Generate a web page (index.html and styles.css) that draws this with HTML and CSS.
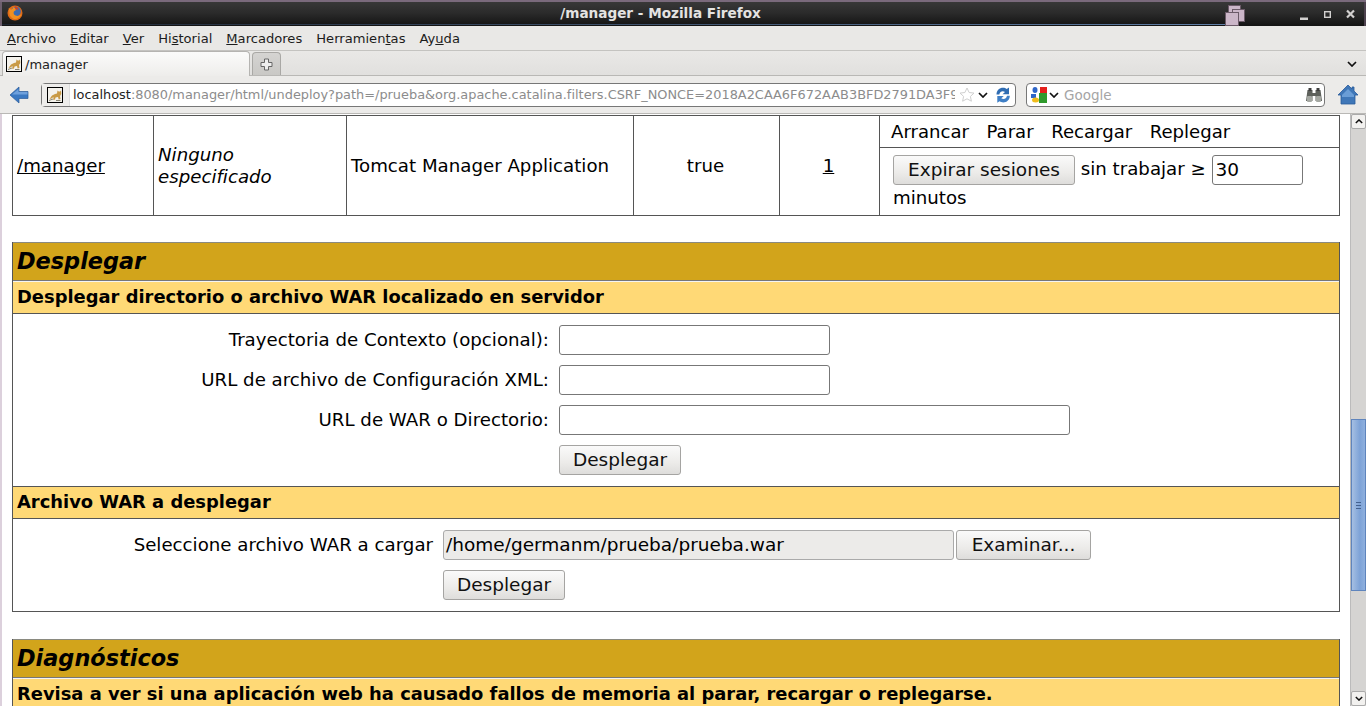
FILE: index.html
```html
<!DOCTYPE html>
<html lang="es">
<head>
<meta charset="utf-8">
<title>/manager - Mozilla Firefox</title>
<link rel="stylesheet" href="styles.css">
</head>
<body>
<svg class="defs" width="0" height="0" aria-hidden="true">
  <symbol id="cat" viewBox="0 0 16 16">
    <rect x="0.5" y="0.5" width="15" height="15" fill="#f4f2ec" stroke="#000"/>
    <path d="M2.500 12l2.500-3.500 3-1.500 2-.5.500-3 1.200 1h1.300l1-1 .3 3.500-1.300 2 .5 3-1.800.5-.7-2.500-2.500.5-.5 2-1.800.5.300-3-2 1.500z" fill="#c99a45"/>
    <path d="M2 13.500l4-1.500M9 13.500h4.500" stroke="#8a8674" stroke-width="1"/>
  </symbol>
  <symbol id="chev" viewBox="0 0 10 6">
    <path d="M1 1l4 4 4-4" fill="none" stroke="#111" stroke-width="1.700"/>
  </symbol>
</svg>

<header class="titlebar">
  <svg class="ff" viewBox="0 0 16 16" width="16" height="16">
    <circle cx="8" cy="8" r="7.500" fill="#e06a17"/>
    <circle cx="9" cy="6.500" r="4.800" fill="#3d6bb0"/>
    <path d="M1.500 3c.8 1.500 1 3 .8 5 .3 3.500 3 6 5.700 6 3.500 0 6-2.500 6.500-5.500-1 1.800-3 2.800-5 2.300-2.200-.5-3.300-2-2.800-3.800.4-1.200 2-1.500 2.600-2.200-.8-1.300-1.800-2.300-3-2.800 0 1.500-1.300 2-2.300 2.800C3.300 4 2.600 3.400 1.500 3z" fill="#f09022"/>
    <path d="M8 1c1.500.5 3 1.800 3.800 3.800-1.200-.2-2.300-.5-3.300 0z" fill="#d9431a"/>
  </svg>
  <h1 class="wintitle">/manager - Mozilla Firefox</h1>
  <div class="winctl">
    <svg class="pager" viewBox="0 0 21 21" width="21" height="21">
      <rect x="3.500" y="0.500" width="12" height="12" fill="#cbb6c8" stroke="#6b5a68"/>
      <rect x="7.500" y="4.500" width="12" height="12" fill="#cbb6c8" stroke="#6b5a68"/>
      <rect x="0.500" y="7.500" width="13" height="13" fill="#cbb6c8" stroke="#6b5a68"/>
    </svg>
    <svg class="wbtn" viewBox="0 0 60 12" width="60" height="12">
      <rect x="1" y="8.500" width="8" height="2.500" fill="#d2d0cf"/>
      <rect x="25.700" y="2.700" width="5.600" height="5.600" fill="none" stroke="#d2d0cf" stroke-width="1.400"/>
      <path d="M48 1.500l7 7M55 1.500l-7 7" stroke="#d2d0cf" stroke-width="2.200"/>
    </svg>
  </div>
</header>

<nav class="menubar">
  <span><u>A</u>rchivo</span><span><u>E</u>ditar</span><span><u>V</u>er</span><span>Hi<u>s</u>torial</span><span><u>M</u>arcadores</span><span>Herramien<u>t</u>as</span><span>Ay<u>u</u>da</span>
</nav>

<div class="tabbar">
  <div class="tab"><svg class="fav" width="16" height="16"><use href="#cat"/></svg><span>/manager</span></div>
  <div class="newtab">
    <svg viewBox="0 0 13 13" width="13" height="13"><path d="M4.500 1h4v3.500H12v4H8.500V12h-4V8.500H1v-4h3.500z" fill="#eee" stroke="#666"/></svg>
  </div>
  <svg class="tablist" width="10" height="6"><use href="#chev"/></svg>
</div>

<div class="navbar">
  <svg class="back" viewBox="0 0 20 20" width="20" height="20">
    <path d="M1 10l9-8v4.500h9v7h-9V18z" fill="#3a78c2" stroke="#2a5a9a" stroke-width=".7"/>
    <path d="M3 9.500l6.500-5.500v3h9v2.500z" fill="#6ea0dc"/>
  </svg>
  <div class="urlbar">
    <div class="idbox"><svg class="fav" width="16" height="16"><use href="#cat"/></svg></div>
    <div class="url"><b>localhost</b>:8080/manager/html/undeploy?path=/prueba&amp;org.apache.catalina.filters.CSRF_NONCE=2018A2CAA6F672AAB3BFD2791DA3F9</div>
    <svg class="star" viewBox="0 0 16 16" width="16" height="16"><path d="M8 1l2.100 4.500 4.900.6-3.600 3.300 1 4.800L8 11.800l-4.400 2.400 1-4.800L1 6.100l4.900-.6z" fill="#fff" stroke="#cfcfcf"/></svg>
    <svg class="drop" width="10" height="6"><use href="#chev"/></svg>
    <svg class="reload" viewBox="0 0 16 16" width="16" height="16">
      <path d="M1.500 7.500C1.500 3.500 4.500.8 8 .8c1.500 0 2.700.5 3.700 1.200L14 .5v6.800H7.500L10 5C8 3.500 5 4 4.300 7.500z" fill="#2f6cb2"/>
      <path d="M14.800 8.700c0 4-3 6.700-6.500 6.700-1.500 0-2.700-.5-3.700-1.200L2.300 15.700V8.900h6.500L6.300 11.200c2 1.500 5 1 5.700-2.500z" fill="#3f7fc6"/>
    </svg>
  </div>
  <div class="searchbar">
    <svg class="glogo" viewBox="0 0 16 16" width="16" height="16">
      <rect x="9" y="0" width="7" height="7" fill="#e4201c"/>
      <rect x="8" y="6" width="8" height="10" fill="#2f9a2c"/>
      <ellipse cx="4" cy="3" rx="2.500" ry="3" fill="#2f66c8"/>
      <rect x="0" y="7" width="5" height="4" fill="#2f66c8"/>
      <ellipse cx="4.500" cy="13" rx="3.500" ry="2.500" fill="#f0bc1c"/>
    </svg>
    <svg class="drop" width="10" height="6"><use href="#chev"/></svg>
    <span class="engine">Google</span>
    <svg class="bino" viewBox="0 0 16 16" width="16" height="16">
      <path d="M1.500 3h5v3h3V3h5L16 14H9.500V9h-3v5H0z" fill="#5e615c"/>
      <rect x="1" y="9" width="5" height="6" rx="1" fill="#a5a8a2"/>
      <rect x="10" y="9" width="5" height="6" rx="1" fill="#a5a8a2"/>
      <rect x="2.500" y="1" width="3" height="3" fill="#3e3e3e"/>
      <rect x="10.500" y="1" width="3" height="3" fill="#3e3e3e"/>
    </svg>
  </div>
  <svg class="home" viewBox="0 0 22 22" width="22" height="22">
    <path d="M11 1L1 11h3v9h14v-9h3l-4-4V3h-2v2z" fill="#3f77b8" stroke="#2a5a9a" stroke-width=".8"/>
    <path d="M5 11l6-6 6 6v2H5z" fill="#6a9dd6"/>
  </svg>
</div>

<div class="viewport">
  <main class="page">
    <table class="apps">
      <tr>
        <td class="c1"><a href="#">/manager</a></td>
        <td class="c2"><i>Ninguno especificado</i></td>
        <td class="c3">Tomcat Manager Application</td>
        <td class="c4">true</td>
        <td class="c5"><a href="#">1</a></td>
        <td class="c6">
          <div class="cmds"><span>Arrancar</span><span>Parar</span><span>Recargar</span><span>Replegar</span></div>
          <div class="expire"><button class="btn exp">Expirar sesiones</button> sin trabajar ≥ <span class="input mins">30</span> minutos</div>
        </td>
      </tr>
    </table>

    <section class="panel deploy">
      <h2 class="head">Desplegar</h2>
      <h3 class="sub">Desplegar directorio o archivo WAR localizado en servidor</h3>
      <div class="form">
        <label class="lbl">Trayectoria de Contexto (opcional):</label><span class="input short"></span>
        <label class="lbl">URL de archivo de Configuración XML:</label><span class="input short"></span>
        <label class="lbl">URL de WAR o Directorio:</label><span class="input long"></span>
        <span></span><button class="btn dep">Desplegar</button>
      </div>
      <h3 class="sub second">Archivo WAR a desplegar</h3>
      <div class="upload">
        <label class="lbl">Seleccione archivo WAR a cargar</label>
        <div class="filerow"><span class="input file">/home/germanm/prueba/prueba.war</span><button class="btn exam">Examinar...</button></div>
        <span></span><button class="btn dep">Desplegar</button>
      </div>
    </section>

    <section class="panel diag">
      <h2 class="head">Diagnósticos</h2>
      <h3 class="sub">Revisa a ver si una aplicación web ha causado fallos de memoria al parar, recargar o replegarse.</h3>
    </section>
  </main>

  <aside class="scrollbar">
    <div class="arrow up"><svg width="8" height="5" viewBox="0 0 10 6"><path d="M1 5l4-4 4 4" fill="none" stroke="#111" stroke-width="1.800"/></svg></div>
    <div class="track">
      <div class="thumb"><i></i><i></i><i></i></div>
    </div>
    <div class="arrow down"><svg width="8" height="5" viewBox="0 0 10 6"><path d="M1 1l4 4 4-4" fill="none" stroke="#111" stroke-width="1.800"/></svg></div>
  </aside>
</div>
</body>
</html>
```
FILE: styles.css
```css
* { box-sizing: border-box; }
html, body { margin: 0; height: 706px; overflow: hidden; }
body {
  display: flex;
  flex-direction: column;
  font-family: "DejaVu Sans", sans-serif;
  color: #000;
  background: #e8e7e5;
}
.defs { position: absolute; }

.titlebar {
  height: 26px;
  flex: none;
  display: flex;
  align-items: center;
  padding: 3px 8px 0 7px;
  position: relative;
  border-top: 2px solid #7a6a7c;
  background: linear-gradient(#383838, #2b2b2b 45%, #131313);
  box-shadow: inset 2px 0 #6d5f6e, inset -2px 0 #4d424e;
}
.titlebar::after {
  content: "";
  position: absolute;
  left: 2px;
  width: 1224px;
  bottom: 1px;
  height: 1px;
  background: linear-gradient(90deg, #1d2430, #5f7ea6);
}
.ff { flex: none; margin-top: -6px; }
.wintitle {
  flex: 1;
  margin: -5px 60px 0 0;
  text-align: center;
  font-size: 13.6px;
  font-weight: 700;
  color: #e4e3e2;
}
.winctl { display: flex; align-items: center; flex: none; position: absolute; top: 3px; right: 7px; z-index: 1; }
.pager { margin-right: 53px; }
.wbtn { margin-top: -2px; }

.menubar {
  height: 25px;
  flex: none;
  display: flex;
  gap: 14px;
  padding: 5px 0 0 7px;
  font-size: 13.1px;
  line-height: 16px;
  color: #1c1c1c;
  background: #e9e8e6;
  border-bottom: 1px solid #c4c3c0;
}

.tabbar {
  height: 25px;
  flex: none;
  display: flex;
  align-items: flex-end;
  padding-left: 2px;
  gap: 2px;
  position: relative;
  background: linear-gradient(#e9e8e6, #e1e0de);
  border-bottom: 1px solid #b9b8b5;
}
.tab {
  width: 248px;
  height: 25px;
  margin-bottom: -1px;
  display: flex;
  align-items: center;
  gap: 3px;
  padding: 0 0 0 3px;
  font-size: 13px;
  color: #222;
  background: linear-gradient(#fbfbfa, #eeedeb);
  border: 1px solid #b5b4b1;
  border-bottom: 0;
  border-radius: 4px 4px 0 0;
}
.newtab {
  width: 29px;
  height: 23px;
  display: flex;
  align-items: center;
  justify-content: center;
  background: linear-gradient(#d5d4d2, #c9c8c5);
  border: 1px solid #a9a8a5;
  border-bottom: 0;
  border-radius: 4px 4px 0 0;
}
.tablist { position: absolute; right: 9px; top: 10px; }
.fav { flex: none; display: block; }

.navbar {
  height: 38px;
  flex: none;
  display: flex;
  align-items: center;
  padding: 0 8px 0 9px;
  background: #ecebe9;
  border-bottom: 1px solid #b9b8b5;
}
.back { flex: none; margin-right: 12px; }
.urlbar, .searchbar {
  height: 24px;
  display: flex;
  align-items: center;
  background: #fff;
  border: 1px solid #777;
  border-radius: 4px;
  font-size: 12.9px;
}
.urlbar { width: 975px; flex: none; }
.idbox {
  width: 28px;
  height: 22px;
  flex: none;
  padding: 3px 0 0 5px;
  background: #eeedeb;
  border-right: 1px solid #ddd;
}
.url {
  flex: 1;
  min-width: 0;
  margin-left: 3px;
  overflow: hidden;
  white-space: nowrap;
  color: #8c8c8c;
}
.url b { font-weight: 400; color: #222; }
.star { flex: none; margin: 0 3px 0 4px; }
.drop { flex: none; }
.reload { flex: none; margin: 0 4px 0 7px; }
.searchbar { width: 299px; flex: none; margin-left: 10px; padding: 0 2px 0 4px; }
.glogo { flex: none; margin-right: 2px; }
.engine { flex: 1; margin-left: 5px; color: #a5a5a5; font-size: 13.5px; }
.bino { flex: none; }
.home { flex: none; margin-left: 12px; }

.viewport {
  flex: 1;
  min-height: 0;
  display: flex;
  background: #fff;
  border-left: 2px solid #dcd0dc;
}
.page {
  flex: 1;
  min-width: 0;
  overflow: hidden;
  padding: 0 10px;
  font-size: 18.2px;
  line-height: 22px;
}

.apps {
  width: 1328px;
  height: 101px;
  table-layout: fixed;
  border-collapse: collapse;
  border: 1px solid #555;
  margin-top: 1px;
  font-size: 18.2px;
}
.apps td { border: 1px solid #555; padding: 0 4px; vertical-align: middle; }
.apps a { color: #000; }
.c1 { width: 141px; }
.c2 { width: 193px; }
.c3 { width: 287px; }
.apps .c4 { width: 146px; text-align: center; padding-right: 6px; }
.apps .c5 { width: 100px; text-align: center; padding-right: 6px; }
.apps .c6 { padding: 0; vertical-align: top; }
.cmds {
  height: 32px;
  display: flex;
  gap: 17.5px;
  align-items: center;
  padding: 0 0 0 11px;
  font-size: 18.1px;
  border-bottom: 1px solid #555;
}
.expire { padding: 7px 4px 0 13px; line-height: 25px; height: 66px; }

.input {
  display: inline-block;
  height: 30px;
  line-height: 28px;
  padding: 0 3px;
  background: #fff;
  border: 1px solid #777;
  border-radius: 3px;
  vertical-align: middle;
  font-size: 18.5px;
}
.mins { width: 91px; }
.btn {
  height: 30px;
  padding: 0 13px;
  font: inherit;
  font-size: 18.5px;
  line-height: 26px;
  color: #111;
  background: linear-gradient(#fafafa, #ecebe9 60%, #dedddb);
  border: 1px solid #a5a4a2;
  border-radius: 3px;
  vertical-align: middle;
}
.exp { width: 182px; padding: 0; }
.dep { width: 122px; padding: 0; justify-self: start; }

.panel { border: 1px solid #555; border-top: 0; width: 1328px; }
.deploy { margin-top: 26px; }
.diag { margin-top: 27px; border-bottom: 0; }
.head {
  height: 39px;
  margin: 0;
  padding: 0 0 0 4px;
  font-size: 22.4px;
  line-height: 37px;
  font-style: italic;
  font-weight: 700;
  background: #d2a41b;
  border-top: 1px solid #8a8a80;
  border-bottom: 1px solid #777;
}
.sub {
  height: 33px;
  margin: 0;
  padding: 0 0 0 4px;
  font-size: 17.9px;
  line-height: 29px;
  font-weight: 700;
  background: #ffd976;
  border-top: 1px solid #f4f4f4;
  border-bottom: 1px solid #555;
}
.second { border-top-color: #555; line-height: 29px; }

.form {
  height: 172px;
  display: grid;
  grid-template-columns: 546px 1fr;
  grid-auto-rows: 30px;
  row-gap: 10px;
  padding-top: 11px;
  align-items: center;
}
.form .input, .form .btn { justify-self: start; }
.lbl { text-align: right; padding-right: 10px; }
.short { width: 271px; }
.long { width: 511px; }

.upload {
  height: 92px;
  display: grid;
  grid-template-columns: 430px 1fr;
  grid-auto-rows: 30px;
  row-gap: 10px;
  padding-top: 11px;
  align-items: center;
}
.filerow { display: flex; gap: 2px; align-items: center; }
.file {
  width: 511px;
  padding: 0 2px;
  background: #ecebe9;
  border-color: #aaa;
}
.exam { width: 135px; padding: 0; }

.scrollbar {
  width: 16px;
  flex: none;
  display: flex;
  flex-direction: column;
  background: #d5d4d2;
  border-left: 1px solid #bbb;
}
.arrow {
  height: 15px;
  flex: none;
  display: flex;
  align-items: center;
  justify-content: center;
  background: #f2f1ef;
  border: 1px solid #aaa;
  border-radius: 2px;
}
.track { flex: 1; padding-top: 290px; background: #d5d4d2; }
.thumb {
  height: 172px;
  display: flex;
  flex-direction: column;
  justify-content: center;
  align-items: center;
  gap: 2px;
  background: linear-gradient(90deg, #a5bfe2, #7ea3d7 60%, #8fb0de);
  border: 1px solid #5f85bd;
}
.thumb i { width: 5px; height: 1px; background: #43618f; }
```
